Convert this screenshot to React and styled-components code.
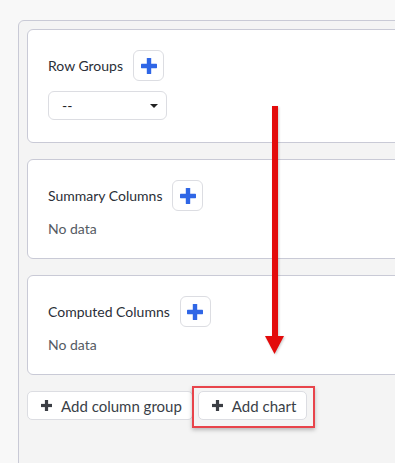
import styled, { createGlobalStyle } from "styled-components";

const GlobalStyle = createGlobalStyle`
  body {
    margin: 0;
    padding: 0;
    background: #f8f8f8;
    font-family: Lato, "Liberation Sans", sans-serif;
    overflow: hidden;
  }
`;

const Page = styled.div`
  position: relative;
  width: 395px;
  height: 463px;
  overflow: hidden;
  padding: 20px 0 0 18px;
  box-sizing: border-box;
`;

const Panel = styled.div`
  width: 520px;
  min-height: 480px;
  box-sizing: border-box;
  background: #f4f4f4;
  border: 1px solid #c9cad6;
  border-radius: 6px 0 0 0;
  padding: 8px 0 0 8px;
  display: flex;
  flex-direction: column;
  gap: 16px;
`;

const Card = styled.div`
  background: #fff;
  border: 1px solid #c9cad6;
  border-radius: 6px;
  padding: 20px 20px ${(p) => p.$bottom || 19}px 20px;
  display: flex;
  flex-direction: column;
  gap: ${(p) => p.$gap || 8}px;
`;

const Header = styled.div`
  display: flex;
  align-items: center;
  gap: 10px;
`;

const Title = styled.span`
  font-size: 14px;
  color: #2b2f38;
`;

const IconButton = styled.button`
  width: 31px;
  height: 31px;
  padding: 0;
  border: 1px solid #dcdde2;
  border-radius: 6px;
  background: #fff;
  display: flex;
  align-items: center;
  justify-content: center;
`;

const Empty = styled.div`
  font-size: 14px;
  line-height: 20px;
  color: #555a63;
`;

const Select = styled.div`
  width: 119px;
  height: 29px;
  box-sizing: border-box;
  border: 1px solid #dcdde2;
  border-radius: 6px;
  display: flex;
  align-items: center;
  justify-content: space-between;
  padding: 0 8px 0 13px;
  font-size: 14px;
  color: #222;
`;

const Caret = styled.span`
  width: 0;
  height: 0;
  border-left: 4px solid transparent;
  border-right: 4px solid transparent;
  border-top: 4px solid #222;
`;

const Actions = styled.div`
  display: flex;
  gap: 5px;
`;

const ActionButton = styled.button`
  height: 29px;
  box-sizing: border-box;
  background: #fff;
  border: 1px solid #dcdde2;
  border-radius: 5px;
  display: flex;
  align-items: center;
  gap: 9px;
  padding: 0 10px 0 13px;
  font-family: Lato, "Liberation Sans", sans-serif;
  font-size: 15px;
  color: #3a3f48;
`;

const Highlight = styled.span`
  position: relative;
  display: inline-flex;
  &::after {
    content: "";
    position: absolute;
    top: -5px;
    left: -6px;
    right: -8px;
    bottom: -8px;
    border: 2.5px solid #e8444b;
    box-shadow: 0 2px 4px rgba(0, 0, 0, 0.25);
    pointer-events: none;
  }
`;

const Arrow = styled.svg`
  position: absolute;
  left: 264px;
  top: 106px;
  filter: drop-shadow(1px 1px 1px rgba(0, 0, 0, 0.2));
`;

const BluePlus = () => (
  <svg width="16" height="16" viewBox="0 0 16 16">
    <rect x="5.8" y="0" width="4.4" height="16" rx="0.6" fill="#2f66e6" />
    <rect x="0" y="5.8" width="16" height="4.4" rx="0.6" fill="#2f66e6" />
  </svg>
);

const DarkPlus = () => (
  <svg width="11" height="11" viewBox="0 0 11 11">
    <rect x="3.9" y="0" width="3.2" height="11" fill="#3b3e44" />
    <rect x="0" y="3.9" width="11" height="3.2" fill="#3b3e44" />
  </svg>
);

export default function App() {
  return (
    <>
      <GlobalStyle />
      <Page>
        <Panel>
          <Card $gap={10} $bottom={22}>
            <Header>
              <Title>Row Groups</Title>
              <IconButton><BluePlus /></IconButton>
            </Header>
            <Select>
              <span>--</span>
              <Caret />
            </Select>
          </Card>
          <Card>
            <Header>
              <Title>Summary Columns</Title>
              <IconButton><BluePlus /></IconButton>
            </Header>
            <Empty>No data</Empty>
          </Card>
          <Card>
            <Header>
              <Title>Computed Columns</Title>
              <IconButton><BluePlus /></IconButton>
            </Header>
            <Empty>No data</Empty>
          </Card>
          <Actions>
            <ActionButton><DarkPlus />Add column group</ActionButton>
            <Highlight>
              <ActionButton><DarkPlus />Add chart</ActionButton>
            </Highlight>
          </Actions>
        </Panel>
        <Arrow width="22" height="250" viewBox="0 0 22 250">
          <rect x="8" y="0" width="6" height="232" fill="#e30b0b" />
          <polygon points="1,230 20,230 10.5,248" fill="#e30b0b" />
        </Arrow>
      </Page>
    </>
  );
}
